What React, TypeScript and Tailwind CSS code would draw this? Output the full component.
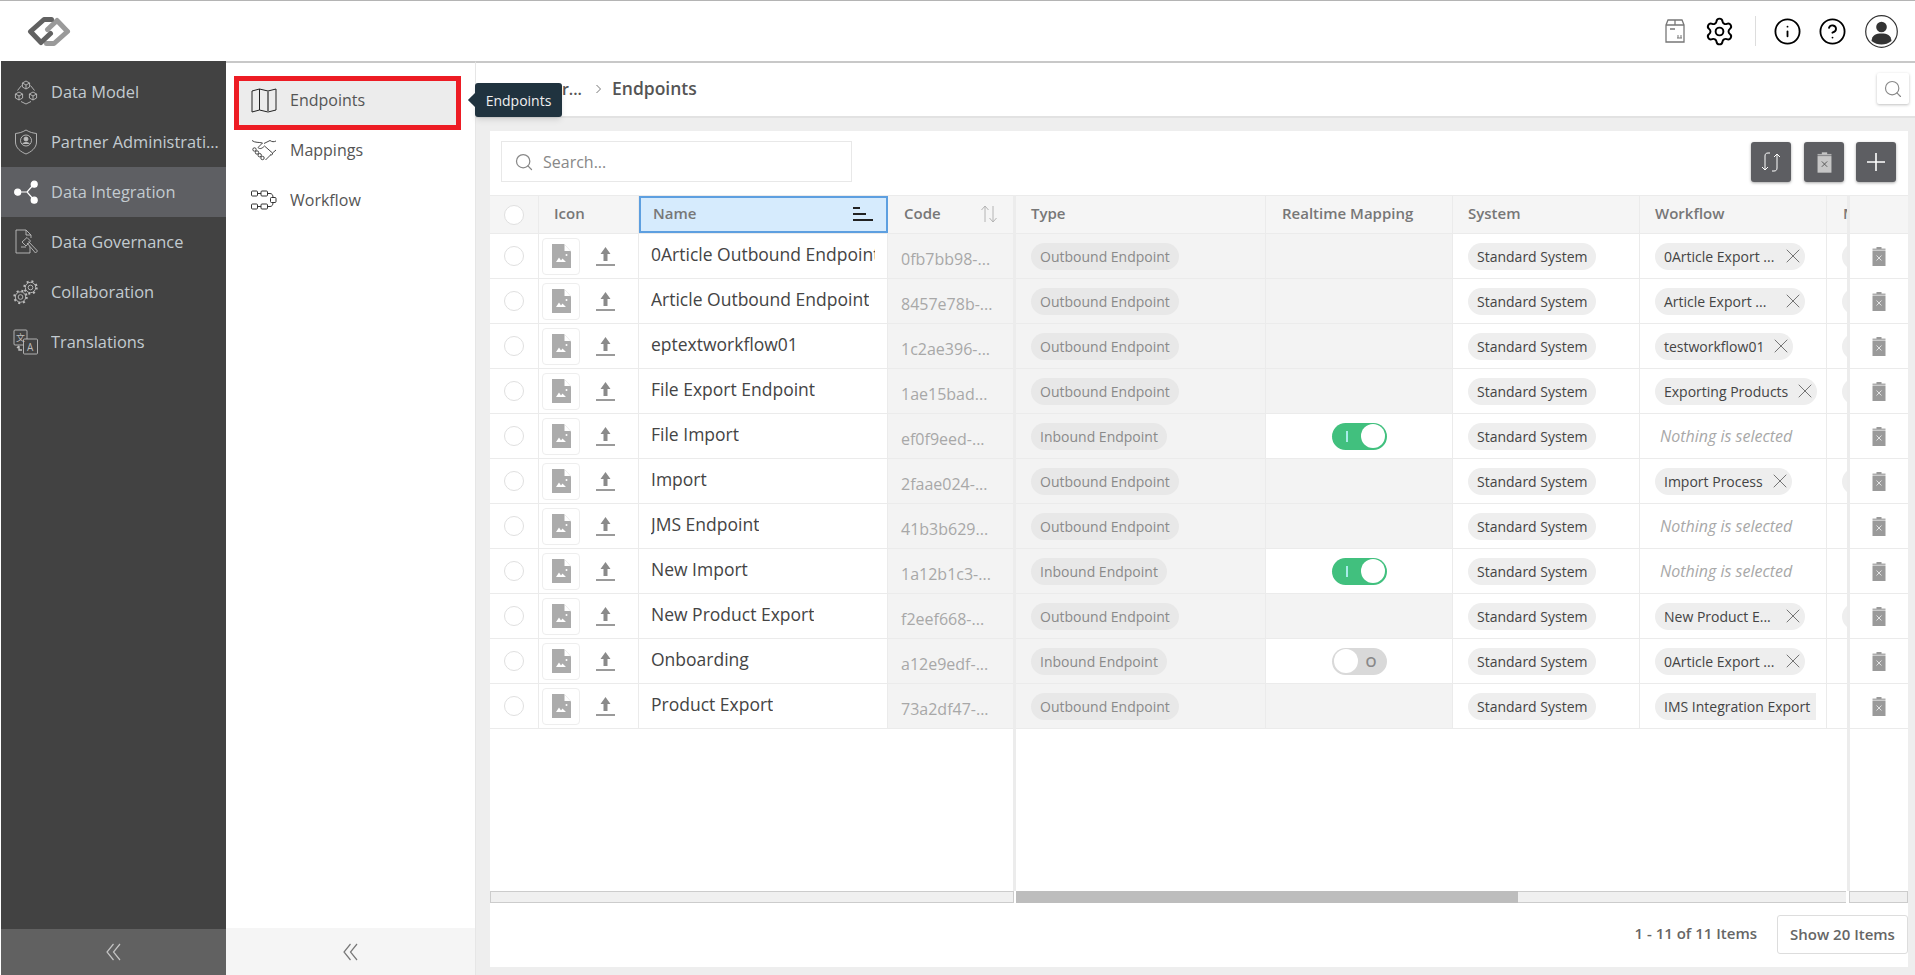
import React from "react";
import { Settings, Info, CircleHelp, Search, X } from "lucide-react";

type Row = {
  name: string;
  code: string;
  type: "Outbound Endpoint" | "Inbound Endpoint";
  toggle?: boolean;
  wf?: string;
  wfFixed?: boolean;
  wfClipped?: boolean;
  next?: boolean;
};

const rows: Row[] = [
  { name: "0Article Outbound Endpoint", code: "0fb7bb98-...", type: "Outbound Endpoint", wf: "0Article Export ...", wfFixed: true, next: true },
  { name: "Article Outbound Endpoint", code: "8457e78b-...", type: "Outbound Endpoint", wf: "Article Export ...", wfFixed: true, next: true },
  { name: "eptextworkflow01", code: "1c2ae396-...", type: "Outbound Endpoint", wf: "testworkflow01", next: true },
  { name: "File Export Endpoint", code: "1ae15bad...", type: "Outbound Endpoint", wf: "Exporting Products", next: true },
  { name: "File Import", code: "ef0f9eed-...", type: "Inbound Endpoint", toggle: true },
  { name: "Import", code: "2faae024-...", type: "Outbound Endpoint", wf: "Import Process", next: true },
  { name: "JMS Endpoint", code: "41b3b629...", type: "Outbound Endpoint" },
  { name: "New Import", code: "1a12b1c3-...", type: "Inbound Endpoint", toggle: true },
  { name: "New Product Export", code: "f2eef668-...", type: "Outbound Endpoint", wf: "New Product E...", wfFixed: true, next: true },
  { name: "Onboarding", code: "a12e9edf-...", type: "Inbound Endpoint", toggle: false, wf: "0Article Export ...", wfFixed: true },
  { name: "Product Export", code: "73a2df47-...", type: "Outbound Endpoint", wf: "IMS Integration Export", wfClipped: true },
];

const Logo = () => (
  <svg width="44" height="31" viewBox="0 0 44 31" fill="none" strokeWidth="5" strokeLinejoin="round" strokeLinecap="round">
    <path d="M19.5 27.5 H27 L40.5 15.5 L30 4.5 L20.5 13.5" stroke="#9a9a9a" />
    <path d="M24.5 3.5 H17 L3.5 15.5 L14 26.5 L23.5 17.5" stroke="#616161" />
  </svg>
);

const Cube = ({ x, y }: { x: number; y: number }) => (
  <g transform={`translate(${x} ${y})`}>
    <path d="M0 -4 L3.6 -2 V2 L0 4 L-3.6 2 V-2 Z M-3.6 -2 L0 0 L3.6 -2 M0 0 V4" />
  </g>
);

const side = { width: 26, height: 26, viewBox: "0 0 26 26", fill: "none", stroke: "#bdbdbd", strokeWidth: 0.9 };

const IconModel = () => (
  <svg {...side}>
    <Cube x={13} y={6} />
    <Cube x={6} y={17} />
    <Cube x={20} y={17} />
    <path d="M8.5 6.5 L4.5 11.5 M17.5 6.5 L21.5 11.5 M8 22.5 L13 25 L18 22.5" />
  </svg>
);
const IconShield = () => (
  <svg {...side}>
    <path d="M13 1 C9 3.5 6 4 2.5 4.5 V13 C2.5 19 8 23 13 25 C18 23 23.5 19 23.5 13 V4.5 C20 4 17 3.5 13 1 Z" />
    <circle cx="13" cy="11.5" r="5.5" />
    <circle cx="13" cy="10" r="2" fill="#bdbdbd" />
    <path d="M9.5 15 C10.5 13 15.5 13 16.5 15" fill="#bdbdbd" />
  </svg>
);
const IconShare = () => (
  <svg width="26" height="26" viewBox="0 0 26 26" fill="#ffffff" stroke="#ffffff" strokeWidth="1.2">
    <path d="M5 13 H14 M21 5 L14 13 L21 21" fill="none" />
    <circle cx="4.7" cy="13.2" r="3" />
    <circle cx="21.2" cy="5.2" r="3" />
    <circle cx="21.2" cy="21.2" r="3" />
  </svg>
);
const IconGavel = () => (
  <svg {...side}>
    <path d="M17 16 V24 H3 V1 H13 L18 6 V9 M13 1 V6 H18" />
    <path d="M9 13 L14 8.5 L17.5 12 L13 17 Z M14 14 L22.5 24 L24.5 22 L15.5 12.5 M8 18 H13" fill="#424242" />
  </svg>
);
const Gear = ({ x, y, r }: { x: number; y: number; r: number }) => (
  <g transform={`translate(${x} ${y})`}>
    <circle r={r} />
    <circle r={r * 0.45} />
    <circle r={r + 1} strokeWidth="2" strokeDasharray="2 2.9" />
  </g>
);
const IconGears = () => (
  <svg {...side}>
    <Gear x={17.5} y={8.5} r={5.2} />
    <Gear x={7.5} y={18} r={5.2} />
  </svg>
);
const IconTranslate = () => (
  <svg {...side}>
    <rect x="1" y="1" width="13" height="15" rx="1" />
    <rect x="10.5" y="10" width="14" height="15" rx="1" fill="#424242" />
    <text x="3" y="12" fontSize="9" fill="#bdbdbd" stroke="none" fontFamily="'Noto Sans CJK SC', sans-serif">文</text>
    <text x="14" y="22" fontSize="10" fill="#bdbdbd" stroke="none" fontFamily="'Open Sans', sans-serif">A</text>
    <path d="M6 17 V21 H9 M4 19 L6 17" strokeWidth="1.4" />
  </svg>
);
const IconMap = () => (
  <svg width="26" height="25" viewBox="0 0 26 25" fill="none" stroke="#222" strokeWidth="1">
    <path d="M1 3 L8.5 1 L17 3 L25 1 V22 L17 24 L8.5 22 L1 24 Z M8.5 1 V22" strokeLinejoin="round" />
    <path d="M17 3 V24" stroke="#777" strokeWidth="2" />
  </svg>
);
const IconShake = () => (
  <svg width="26" height="23" viewBox="0 0 26 23" fill="none" stroke="#333" strokeWidth="0.9" strokeLinejoin="round">
    <path d="M1 1.5 C4 4 8 3 11.5 4 L7 8.5 C9 10.5 11 9.5 13.5 7 L21.5 14 L25 11" />
    <path d="M13 4.5 L19 1.5 C21 3 23 3 25 2" />
    <path d="M21.5 14 C22 16 20 16.5 19 15.5 M19.5 16 L14.5 21" />
    <circle cx="3.5" cy="10.5" r="1.7" />
    <circle cx="6" cy="13.5" r="1.7" />
    <circle cx="8.7" cy="16.2" r="1.7" />
    <circle cx="11.5" cy="19" r="1.7" />
  </svg>
);
const IconFlow = () => (
  <svg width="26" height="20" viewBox="0 0 26 20" fill="none" stroke="#333" strokeWidth="1">
    <rect x="0.5" y="1" width="6" height="5" rx="1" />
    <rect x="10" y="1" width="6.5" height="5" rx="1" />
    <rect x="0.5" y="14" width="6" height="5" rx="1" />
    <rect x="10" y="14" width="6.5" height="5" rx="1" />
    <rect x="19.5" y="7.5" width="5.5" height="5" rx="1" />
    <path d="M6.5 3.5 H10 M6.5 16.5 H10 M16.5 3.5 H19 C21 3.5 22 5 22 7.5 M16.5 16.5 H19 C21 16.5 22 15 22 12.5" />
  </svg>
);
const DoubleChevron = ({ color }: { color: string }) => (
  <svg width="15" height="18" viewBox="0 0 15 18" fill="none" stroke={color} strokeWidth="1.2">
    <path d="M7.5 1 L1 9 L7.5 17 M14 1 L7.5 9 L14 17" />
  </svg>
);

const NavItem = ({ icon, label, active }: { icon: React.ReactNode; label: string; active?: boolean }) => (
  <div className={`h-[50px] flex items-center ${active ? "bg-[#5e5f63]" : ""}`}>
    <div className="w-[26px] ml-[12px] flex justify-center">{icon}</div>
    <span className="ml-[12px] text-[16.4px] text-[#c3cbd0] truncate w-[170px]">{label}</span>
  </div>
);

const SubItem = ({ icon, label }: { icon: React.ReactNode; label: string }) => (
  <div className="h-[50px] flex items-center">
    <div className="w-[26px] ml-[25px] flex justify-center">{icon}</div>
    <span className="ml-[13px] text-[16px] text-[#555]">{label}</span>
  </div>
);

const FileImage = () => (
  <svg width="19" height="24" viewBox="0 0 19 24">
    <path d="M0 0 H12 L19 7.5 V24 H0 Z" fill="#ababab" />
    <path d="M12.5 0.5 L18.5 7 H12.5 Z" fill="#fff" />
    <circle cx="14.5" cy="11" r="1" fill="#fff" />
    <path d="M4 18 L7 13.5 L9 16.5 L10.5 14.5 L14 18 Z" fill="#fff" />
  </svg>
);
const UploadIcon = () => (
  <svg width="19" height="19" viewBox="0 0 19 19">
    <path d="M9.5 0 L14.5 7 H11.5 V14 H7.5 V7 H4.5 Z" fill="#8a8a8a" />
    <rect x="0" y="17" width="19" height="2" fill="#9a9a9a" />
  </svg>
);
const Trash = ({ body, mark, w = 14, h = 19 }: { body: string; mark: string; w?: number; h?: number }) => (
  <svg width={w} height={h} viewBox="0 0 14 19">
    <rect x="4.5" y="0" width="5" height="2" fill={body} />
    <rect x="0.5" y="1.5" width="13" height="1.5" fill={body} opacity="0.8" />
    <rect x="0.5" y="3.5" width="13" height="15.5" fill={body} />
    <path d="M4.5 8.5 L9.5 13.5 M9.5 8.5 L4.5 13.5" stroke={mark} strokeWidth="0.9" />
  </svg>
);
const Radio = () => <div className="w-[20px] h-[20px] rounded-full border border-[#e0e0e0] bg-white" />;

const Chip = ({ children, className = "" }: { children: React.ReactNode; className?: string }) => (
  <div className={`h-[27px] rounded-full flex items-center px-[9px] text-[14px] whitespace-nowrap ${className}`}>{children}</div>
);

const Toggle = ({ on }: { on: boolean }) =>
  on ? (
    <div className="w-[55px] h-[27px] rounded-full bg-[#41c07e] flex items-center justify-between pr-[1.5px] pl-[14px]">
      <span className="w-[2px] h-[11px] bg-[#a8ecea]" />
      <span className="w-[24px] h-[24px] rounded-full bg-white" />
    </div>
  ) : (
    <div className="w-[55px] h-[27px] rounded-full bg-[#d9d9d9] flex items-center justify-between pl-[2px] pr-[10px]">
      <span className="w-[24px] h-[24px] rounded-full bg-white" />
      <span className="text-[14px] font-semibold text-[#888]">O</span>
    </div>
  );

const HeadCell = ({ w, label, children, className = "" }: { w: string; label?: string; children?: React.ReactNode; className?: string }) => (
  <div className={`${w} shrink-0 h-full flex items-center border-r border-[#ebebeb] pb-[2px] text-[15px] font-semibold text-[#777] ${className}`}>
    {label}
    {children}
  </div>
);

const rowCls = "h-[45px] flex border-b border-[#ebebeb]";
const cellCls = "shrink-0 h-full flex items-center border-r border-[#ebebeb]";

const App = () => (
  <div className="w-full h-[975px] flex flex-col overflow-hidden bg-white font-['Open_Sans',sans-serif]">
    <header className="h-[61px] shrink-0 border-t border-[#b4b4b4] flex items-center pl-[27px] pr-[17.5px]">
      <Logo />
      <div className="ml-auto flex items-center">
        <svg width="20" height="24" viewBox="0 0 20 24" fill="none" stroke="#777" strokeWidth="1.3">
          <path d="M1 6 L3 1 H17 L19 6 V23 H1 Z M1 6 H19 M10 1 V6" />
          <path d="M5 10 H10" strokeWidth="1.5" />
          <path d="M12 19 H17 M13 16 V19 M16 16 V19" strokeWidth="1" />
        </svg>
        <Settings size={31} strokeWidth={1.5} className="ml-[19.5px] text-black" />
        <div className="ml-[19.5px] w-px h-[30px] bg-[#ddd]" />
        <Info size={29} strokeWidth={1.5} className="ml-[17px] text-black" />
        <CircleHelp size={29} strokeWidth={1.5} className="ml-[16px] text-black" />
        <svg width="33" height="33" viewBox="0 0 33 33" className="ml-[18px]">
          <circle cx="16.5" cy="16.5" r="15.8" fill="none" stroke="#333" strokeWidth="1.2" />
          <circle cx="16.5" cy="12" r="5.3" fill="#333" />
          <path d="M6.5 26 C7 20 11 18.5 16.5 18.5 C22 18.5 26 20 26.5 26 C23.5 28.5 20 29.5 16.5 29.5 C13 29.5 9.5 28.5 6.5 26 Z" fill="#333" />
        </svg>
      </div>
    </header>

    <div className="flex-1 flex min-h-0 pl-px">
      <aside className="w-[225px] shrink-0 bg-[#424242] flex flex-col">
        <div className="pt-[6px] flex flex-col">
          <NavItem icon={<IconModel />} label="Data Model" />
          <NavItem icon={<IconShield />} label="Partner Administration" />
          <NavItem icon={<IconShare />} label="Data Integration" active />
          <NavItem icon={<IconGavel />} label="Data Governance" />
          <NavItem icon={<IconGears />} label="Collaboration" />
          <NavItem icon={<IconTranslate />} label="Translations" />
        </div>
        <div className="mt-auto h-[46px] bg-[#616161] flex items-center justify-center">
          <DoubleChevron color="#c4c4c4" />
        </div>
      </aside>

      <nav className="w-[249px] shrink-0 flex flex-col border-t-2 border-[#c8c8c8]">
        <div className="flex flex-col pt-[13px] relative">
          <div className="h-[54px] w-[227px] ml-[8px] -mb-[5px] flex items-center bg-[#ececec] border-[5px] border-[#ed1c24] pb-[6px] box-border">
            <div className="w-[26px] ml-[12px] flex justify-center"><IconMap /></div>
            <span className="ml-[13px] text-[16px] text-[#555]">Endpoints</span>
          </div>
          <SubItem icon={<IconShake />} label="Mappings" />
          <SubItem icon={<IconFlow />} label="Workflow" />
        </div>
        <div className="mt-auto h-[47px] bg-[#f5f5f5] flex items-center justify-center">
          <DoubleChevron color="#777" />
        </div>
      </nav>

      <main className="flex-1 min-w-0 flex flex-col border-t-2 border-l border-[#e6e6e6] border-t-[#c8c8c8]">
        <div className="relative h-[55px] shrink-0 bg-white border-b-2 border-[#e2e2e2] flex items-center pb-[2px]">
          <span className="w-[106px] shrink-0 text-right whitespace-nowrap text-[16px] font-semibold text-[#555]">Data Integr...</span>
          <svg width="8" height="12" viewBox="0 0 8 12" fill="none" stroke="#777" className="ml-[13px]">
            <path d="M1.5 2 L5.5 6 L1.5 10" />
          </svg>
          <span className="ml-[9px] text-[17.5px] font-semibold text-[#555]">Endpoints</span>
          <div className="absolute -left-px top-[20px] w-[87px] h-[34px] bg-[#20333f] rounded-[3px] shadow-md flex items-center justify-center text-[14px] text-[#f0f0f0] z-10">
            <span className="absolute -left-[5px] top-[12px] w-[10px] h-[10px] bg-[#20333f] rotate-45" />
            <span className="relative">Endpoints</span>
          </div>
          <div className="ml-auto mr-[6px] w-[32px] h-[31px] bg-white shadow-[0_1px_3px_rgba(0,0,0,0.25)] rounded-[2px] flex items-center justify-center">
            <Search size={20} strokeWidth={1.4} className="text-[#888]" />
          </div>
        </div>

        <div className="flex-1 min-h-0 bg-[#eeeeee] pl-[14px] pr-[7px] pt-[13px] pb-[8px]">
          <div className="w-[1418px] h-[836px] bg-white flex flex-col">
            <div className="h-[64px] shrink-0 flex items-start pt-[10px] pl-[11px] pr-[12px]">
              <div className="w-[351px] h-[41px] border border-[#e8e8e8] flex items-center pl-[12px]">
                <Search size={20} strokeWidth={1.5} className="text-[#888]" />
                <span className="ml-[9px] text-[16px] text-[#888]">Search...</span>
              </div>
              <div className="ml-auto flex h-[40px] mt-px">
                <div className="w-[40px] h-[40px] bg-[#5d5e62] rounded-[3px] shadow-[0_1px_3px_rgba(0,0,0,0.35)] flex items-center justify-center">
                  <svg width="20" height="20" viewBox="0 0 20 20" fill="none" stroke="#fff" strokeWidth="1">
                    <path d="M9 1 H7 C5 1 4 2 4 4 V18 M1 15 L4 18 L7 15" />
                    <path d="M11 19 H13 C15 19 16 18 16 16 V2 M13 5 L16 2 L19 5" />
                  </svg>
                </div>
                <div className="ml-[13px] w-[40px] h-[40px] bg-[#5d5e62] rounded-[3px] shadow-[0_1px_3px_rgba(0,0,0,0.35)] flex items-center justify-center">
                  <Trash body="#c6c6c6" mark="#555" w={15} h={21} />
                </div>
                <div className="ml-[12px] w-[40px] h-[40px] bg-[#5d5e62] rounded-[3px] shadow-[0_1px_3px_rgba(0,0,0,0.35)] flex items-center justify-center">
                  <svg width="20" height="20" viewBox="0 0 20 20" stroke="#fff" strokeWidth="1.6">
                    <path d="M10 1 V19 M1 10 H19" />
                  </svg>
                </div>
              </div>
            </div>

            <div className="h-[696px] shrink-0 flex">
              {/* frozen left */}
              <div className="w-[526px] shrink-0 border-r-[3px] border-[#ececec]">
                <div className="h-[39px] flex bg-[#f5f5f5] border-y border-[#ebebeb]">
                  <HeadCell w="w-[49px]" className="justify-center !pb-0"><Radio /></HeadCell>
                  <HeadCell w="w-[100px]" label="Icon" className="pl-[15px]" />
                  <div className="w-[249px] shrink-0 h-full bg-[#d6ebfd] border-2 border-[#5d9fe0] flex items-center pl-[12px] pr-[13px] pb-[2px] text-[15px] font-semibold text-[#777]">
                    Name
                    <svg width="20" height="14" viewBox="0 0 20 14" className="ml-auto">
                      <rect x="0" y="0" width="7" height="2" fill="#222" />
                      <rect x="0" y="6" width="13" height="2" fill="#222" />
                      <rect x="0" y="12" width="20" height="2" fill="#222" />
                    </svg>
                  </div>
                  <HeadCell w="w-[125px]" label="Code" className="pl-[16px] pr-[15px] border-r-0">
                    <svg width="18" height="18" viewBox="0 0 18 18" fill="none" stroke="#b4b4b4" className="ml-auto">
                      <path d="M5 17 V1 M1.5 5 L5 1 L8.5 5 M13 1 V17 M9.5 13 L13 17 L16.5 13" />
                    </svg>
                  </HeadCell>
                </div>
                {rows.map((r) => (
                  <div key={r.name} className={rowCls}>
                    <div className={`${cellCls} w-[49px] justify-center`}><Radio /></div>
                    <div className={`${cellCls} w-[100px] pl-[3px]`}>
                      <div className="w-[38px] h-[37px] border border-[#eeeeee] rounded-[4px] flex items-center justify-center"><FileImage /></div>
                      <div className="ml-[16px]"><UploadIcon /></div>
                    </div>
                    <div className={`${cellCls} w-[249px] pl-[12px] pr-[12px] pb-[4px] text-[17.5px] text-[#444]`}>
                      <span className="overflow-hidden whitespace-nowrap">{r.name}</span>
                    </div>
                    <div className="shrink-0 h-full flex items-center w-[125px] bg-[#f3f3f3] pl-[13px] pt-[6px] text-[16px] text-[#a8a8a8] whitespace-nowrap overflow-hidden">
                      {r.code}
                    </div>
                  </div>
                ))}
              </div>

              {/* scrolling centre */}
              <div className="w-[831px] shrink-0 overflow-hidden">
                <div className="h-[39px] flex bg-[#f5f5f5] border-y border-[#ebebeb]">
                  <HeadCell w="w-[250px]" label="Type" className="pl-[15px]" />
                  <HeadCell w="w-[187px]" label="Realtime Mapping" className="pl-[16px]" />
                  <HeadCell w="w-[187px]" label="System" className="pl-[15px]" />
                  <HeadCell w="w-[187px]" label="Workflow" className="pl-[15px]" />
                  <HeadCell w="w-[200px]" label="Mandatory" className="pl-[16px]" />
                </div>
                {rows.map((r) => (
                  <div key={r.name} className={rowCls}>
                    <div className={`${cellCls} w-[250px] bg-[#f3f3f3] pl-[15px]`}>
                      <Chip className="bg-[#e8e8e8] text-[#8a8a8a]">{r.type}</Chip>
                    </div>
                    <div className={`${cellCls} w-[187px] justify-center ${r.toggle === undefined ? "bg-[#f3f3f3]" : "bg-white"}`}>
                      {r.toggle !== undefined && <Toggle on={r.toggle} />}
                    </div>
                    <div className={`${cellCls} w-[187px] pl-[15px]`}>
                      <Chip className="bg-[#eeeeee] text-[#444]">Standard System</Chip>
                    </div>
                    <div className={`${cellCls} w-[187px] pl-[15px] overflow-hidden`}>
                      {r.wf ? (
                        r.wfClipped ? (
                          <div className="w-[161px] h-[27px] bg-[#eeeeee] rounded-l-full flex items-center pl-[9px] text-[14px] text-[#444] whitespace-nowrap overflow-hidden">{r.wf}</div>
                        ) : (
                          <Chip className={`bg-[#eeeeee] text-[#444] ${r.wfFixed ? "w-[150px] justify-between" : ""}`}>
                            <span>{r.wf}</span>
                            <X size={24} strokeWidth={0.8} className={`text-[#555] -mr-[9px] ${r.wfFixed ? "" : "ml-[5px]"}`} />
                          </Chip>
                        )
                      ) : (
                        <span className="pl-[5px] text-[16px] italic text-[#a8a8a8] whitespace-nowrap">Nothing is selected</span>
                      )}
                    </div>
                    <div className="w-[200px] shrink-0 h-full flex items-center pl-[15px]">
                      {r.next && <Chip className="bg-[#eeeeee] w-[100px]"> </Chip>}
                    </div>
                  </div>
                ))}
              </div>

              {/* frozen right */}
              <div className="w-[61px] shrink-0 border-l-[3px] border-[#ececec]">
                <div className="h-[39px] bg-[#f5f5f5] border-y border-[#ebebeb]" />
                {rows.map((r) => (
                  <div key={r.name} className={`${rowCls} items-center justify-center`}>
                    <Trash body="#9a9a9a" mark="#e8e8e8" />
                  </div>
                ))}
              </div>
            </div>

            <div className="h-[12px] shrink-0 flex">
              <div className="w-[524px] h-full bg-[#f0f0f0] border border-[#cccccc]" />
              <div className="ml-[2px] w-[830px] h-full bg-[#f0f0f0] border-y border-[#cccccc] flex">
                <div className="w-[502px] -my-px bg-[#bdbdbd]" />
              </div>
              <div className="ml-[3px] w-[59px] h-full bg-[#f0f0f0] border border-[#cccccc]" />
            </div>

            <div className="flex-1 flex items-start justify-end pt-[12px]">
              <span className="mt-[7px] text-[15px] font-semibold text-[#666]">1 - 11 of 11 Items</span>
              <div className="ml-[20px] w-[131px] h-[39px] border border-[#dddddd] rounded-[3px] flex items-center justify-center text-[15px] font-semibold text-[#666]">
                Show 20 Items
              </div>
            </div>
          </div>
        </div>
      </main>
    </div>
  </div>
);

export default App;
